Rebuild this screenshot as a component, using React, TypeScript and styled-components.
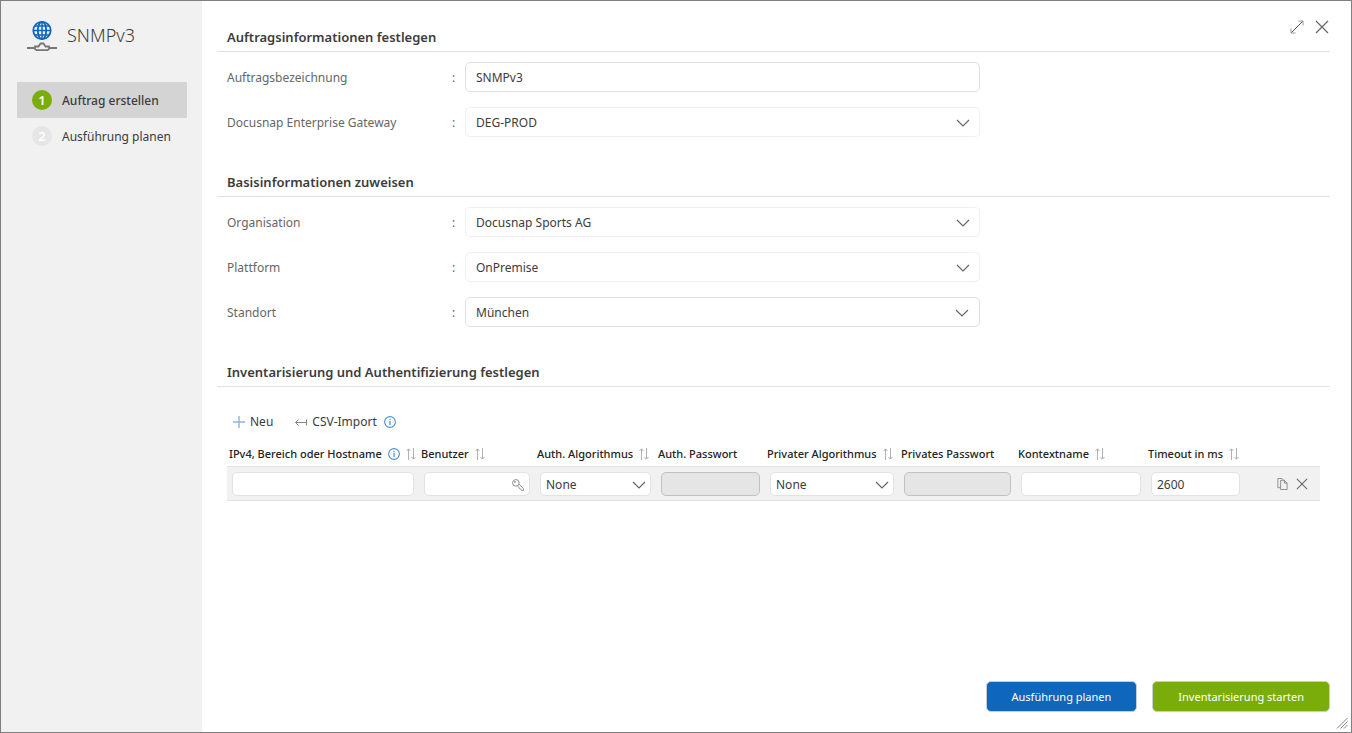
import React from 'react';
import styled, { createGlobalStyle } from 'styled-components';

const GlobalStyle = createGlobalStyle`
  *, *::before, *::after { box-sizing: border-box; }
  body { margin: 0; background: #fff; }
  body, button, input, select {
    font-family: 'Noto Sans', 'Open Sans', sans-serif;
    font-size: 12px;
    color: #3c3c3c;
  }
  button { cursor: pointer; }
`;

const Dialog = styled.div`
  position: relative;
  display: flex;
  min-height: 100vh;
  border: 1px solid #7f7f7f;
  background: #fff;
`;

const Sidebar = styled.aside`
  flex: 0 0 201px;
  padding: 17px 15px 0 16px;
  background: #f1f1f1;
`;

const Brand = styled.div`
  display: flex;
  align-items: center;
  gap: 10px;
  height: 36px;
  padding-left: 10px;
`;

const BrandTitle = styled.h1`
  margin: 0;
  padding-bottom: 2px;
  font-size: 18px;
  font-weight: 300;
  line-height: 24px;
`;

const Steps = styled.ol`
  margin: 28px 0 0;
  padding: 0;
  list-style: none;
`;

const StepButton = styled.button<{ $active?: boolean }>`
  display: flex;
  align-items: center;
  gap: 10px;
  width: 100%;
  height: 36px;
  padding: 0 15px;
  border: 0;
  background: ${(p) => (p.$active ? '#d4d4d4' : 'transparent')};
  font-weight: ${(p) => (p.$active ? 500 : 400)};
  white-space: nowrap;
`;

const StepNumber = styled.span<{ $active?: boolean }>`
  display: flex;
  align-items: center;
  justify-content: center;
  width: 20px;
  height: 20px;
  border-radius: 50%;
  background: ${(p) => (p.$active ? '#7aad0a' : '#e6e6e6')};
  color: #fff;
  font-size: 13px;
  font-weight: 600;
`;

const Main = styled.main`
  display: flex;
  flex: 1;
  flex-direction: column;
  min-width: 0;
  padding: 13px 21px 20px 15px;
`;

const Section = styled.section`
  & + & { margin-top: 22px; }
`;

const SectionHeader = styled.header`
  display: flex;
  align-items: center;
  justify-content: space-between;
  height: 38px;
  padding-top: 8px;
  padding-left: 10px;
  border-bottom: 1px solid #e1e1e1;
`;

const SectionTitle = styled.h2`
  margin: 0;
  font-size: 13px;
  font-weight: 600;
  line-height: 20px;
`;

const WindowControls = styled.div`
  display: flex;
  align-items: center;
  gap: 11px;
  padding-right: 1px;
  margin-bottom: 20px;
`;

const IconButton = styled.button`
  display: flex;
  align-items: center;
  justify-content: center;
  padding: 0;
  border: 0;
  background: none;
  color: #666;
`;

const Fields = styled.div`
  display: grid;
  gap: 15px;
  padding: 10px 0 0 10px;
`;

const FieldRow = styled.div`
  display: grid;
  grid-template-columns: 225px 13px minmax(0, 515px);
  align-items: center;
  color: #666;
`;

const fieldBox = `
  width: 100%;
  height: 30px;
  padding: 0 10px;
  border-radius: 5px;
  background: #fff;
  outline: 0;
`;

const TextField = styled.input`
  ${fieldBox}
  border: 1px solid #e0e0e0;
`;

const SelectWrap = styled.div<{ $inset?: number }>`
  position: relative;
  svg {
    position: absolute;
    top: 50%;
    right: ${(p) => p.$inset ?? 10}px;
    margin-top: -3px;
    color: #666;
    pointer-events: none;
  }
`;

const SelectField = styled.select<{ $strong?: boolean }>`
  ${fieldBox}
  display: block;
  appearance: none;
  border: 1px solid ${(p) => (p.$strong ? '#e0e0e0' : '#f0f0f0')};
`;

const Toolbar = styled.div`
  display: flex;
  align-items: center;
  gap: 22px;
  margin-top: 25px;
  padding-left: 16px;
  height: 20px;
`;

const ToolGroup = styled.div`
  display: flex;
  align-items: center;
  gap: 7px;
`;

const ToolButton = styled.button`
  display: flex;
  align-items: center;
  gap: 5px;
  padding: 0;
  border: 0;
  background: none;
  line-height: 20px;
`;

const TableWrap = styled.div`
  margin-top: 10px;
  padding: 0 10px;
`;

const Table = styled.table`
  width: 100%;
  table-layout: fixed;
  border-collapse: collapse;
`;

const HeadCell = styled.th`
  height: 24px;
  padding: 0 0 0 2px;
  font-size: 11px;
  font-weight: 500;
  text-align: left;
  white-space: nowrap;
  color: #222;
`;

const HeadContent = styled.div`
  display: flex;
  align-items: center;
  gap: 6px;
`;

const BodyRow = styled.tr`
  height: 34px;
  background: #f1f1f1;
  border-top: 1px solid #e3e3e3;
  border-bottom: 1px solid #e3e3e3;
`;

const Cell = styled.td`
  padding: 2px 5px 0;
`;

const cellBox = `
  display: block;
  width: 100%;
  height: 24px;
  padding: 0 5px;
  border-radius: 5px;
  outline: 0;
`;

const CellInput = styled.input`
  ${cellBox}
  border: 1px solid #e3e3e3;
  background: #fff;
  &:disabled {
    border-color: #c2c2c2;
    background: #e5e5e5;
  }
`;

const CellSelect = styled.select`
  ${cellBox}
  appearance: none;
  border: 1px solid #e3e3e3;
  background: #fff;
`;

const KeyField = styled.div`
  position: relative;
`;

const KeyButton = styled(IconButton)`
  position: absolute;
  top: 7px;
  right: 6px;
`;

const RowActions = styled.div`
  display: flex;
  align-items: center;
  justify-content: flex-end;
  gap: 8px;
  padding-right: 7px;
`;

const Footer = styled.footer`
  display: flex;
  justify-content: flex-end;
  gap: 15px;
  margin-top: auto;
  padding-top: 20px;
`;

const ActionButton = styled.button<{ $tone: string }>`
  height: 31px;
  padding: 0 25px;
  border: 1px solid #c8cdd4;
  border-radius: 5px;
  background: ${(p) => p.$tone};
  color: #fff;
  font-size: 11px;
  white-space: nowrap;
`;

const Grip = styled.svg`
  position: absolute;
  right: 3px;
  bottom: 3px;
`;

const NetworkIcon = () => (
  <svg width="30" height="32" viewBox="0 0 30 32" fill="none" aria-hidden="true">
    <g stroke="#0f66bd" strokeWidth="1.8">
      <circle cx="15" cy="10.500" r="8.700" />
      <ellipse cx="15" cy="10.500" rx="4.200" ry="8.700" />
      <path d="M15 1.800v17.400M6.300 10.500h17.400M7.500 6h15M7.500 15h15" strokeWidth="1.500" />
    </g>
    <path d="M0 28h7.500M22.500 28H30" stroke="#777" strokeWidth="2" />
    <path d="M8 26.500h3.500l2-3h3l2 3H22V29l-1.500 1.200h-11L8 29z" stroke="#777" strokeWidth="1.800" />
  </svg>
);

const ExpandIcon = () => (
  <svg width="14" height="14" viewBox="0 0 14 14" fill="none" stroke="currentColor" aria-hidden="true">
    <path d="M1 13L13 1" stroke="#555" />
    <path d="M8.500 1h4.500v4.500M1 8.500V13h4.500" stroke="#999" />
  </svg>
);

const CloseIcon = ({ size }: { size: number }) => (
  <svg width={size} height={size} viewBox="0 0 14 14" fill="none" stroke="currentColor" strokeWidth="1.2" aria-hidden="true">
    <path d="M1 1l12 12M13 1L1 13" />
  </svg>
);

const ChevronIcon = () => (
  <svg width="14" height="8" viewBox="0 0 14 8" fill="none" stroke="currentColor" strokeWidth="1.2" aria-hidden="true">
    <path d="M1 1l6 6 6-6" />
  </svg>
);

const PlusIcon = () => (
  <svg width="12" height="12" viewBox="0 0 12 12" fill="none" stroke="#8ab6de" aria-hidden="true">
    <path d="M6 0v12M0 6h12" strokeWidth="1.4" />
  </svg>
);

const ImportIcon = () => (
  <svg width="12" height="8" viewBox="0 0 12 8" fill="none" stroke="#777" aria-hidden="true">
    <path d="M1 4.500h10M3.500 1.500l-3 3 3 3M11.500 1.500v6" strokeWidth="0.9" />
  </svg>
);

const InfoIcon = () => (
  <svg width="12" height="12" viewBox="0 0 12 12" fill="none" stroke="#4a92d4" aria-label="Info" role="img">
    <circle cx="6" cy="6" r="5.400" strokeWidth="1.1" />
    <path d="M6 5v4M6 3v1.200" strokeWidth="1.2" />
  </svg>
);

const SortIcon = () => (
  <svg width="10" height="12" viewBox="0 0 10 12" fill="none" stroke="#a8a8a8" aria-hidden="true">
    <path d="M2.500 12V1M0.500 3l2-2.200 2 2.200M7.500 0v11M5.500 9l2 2.200 2-2.200" strokeWidth="0.9" />
  </svg>
);

const KeyIcon = () => (
  <svg width="12" height="12" viewBox="0 0 13 13" fill="none" stroke="#888" strokeWidth="1" aria-hidden="true">
    <circle cx="4.200" cy="4.200" r="3.600" />
    <circle cx="3.200" cy="3.200" r="0.600" />
    <path d="M7.600 5.600l4.800 4.800v2h-2l-1-1.600-1.400-.4-.6-1.600-1.600-1.300" />
  </svg>
);

const CopyIcon = () => (
  <svg width="11" height="12" viewBox="0 0 11 13" fill="none" stroke="#888" strokeWidth="1" aria-hidden="true">
    <path d="M3 10.500H.5v-10h4.500l1.500 1.500" />
    <path d="M3.500 2.500h4l3 3v7h-7zM7.500 2.500v3h3" />
  </svg>
);

type FieldProps = { id: string; label: string; children: React.ReactNode };

const Field = ({ id, label, children }: FieldProps) => (
  <FieldRow>
    <label htmlFor={id}>{label}</label>
    <span>:</span>
    {children}
  </FieldRow>
);

type DropdownProps = { id: string; value: string; strong?: boolean };

const Dropdown = ({ id, value, strong }: DropdownProps) => (
  <SelectWrap $inset={strong ? 11 : 10}>
    <SelectField id={id} $strong={strong} defaultValue={value}>
      <option>{value}</option>
    </SelectField>
    <ChevronIcon />
  </SelectWrap>
);

const AlgorithmSelect = ({ label }: { label: string }) => (
  <SelectWrap $inset={5}>
    <CellSelect aria-label={label} defaultValue="None">
      <option>None</option>
    </CellSelect>
    <ChevronIcon />
  </SelectWrap>
);

const columns = [
  { label: 'IPv4, Bereich oder Hostname', width: 192, info: true, sort: true },
  { label: 'Benutzer', width: 116, sort: true },
  { label: 'Auth. Algorithmus', width: 121, sort: true },
  { label: 'Auth. Passwort', width: 109 },
  { label: 'Privater Algorithmus', width: 134, sort: true },
  { label: 'Privates Passwort', width: 117 },
  { label: 'Kontextname', width: 130, sort: true },
  { label: 'Timeout in ms', width: 99, sort: true },
];

const Column = styled.col<{ $width: number }>`
  width: ${(p) => p.$width}px;
`;

export default function App() {
  return (
    <>
      <GlobalStyle />
      <Dialog role="dialog" aria-label="SNMPv3">
        <Sidebar>
          <Brand>
            <NetworkIcon />
            <BrandTitle>SNMPv3</BrandTitle>
          </Brand>
          <Steps>
            <li>
              <StepButton $active>
                <StepNumber $active>1</StepNumber>
                Auftrag erstellen
              </StepButton>
            </li>
            <li>
              <StepButton>
                <StepNumber>2</StepNumber>
                Ausführung planen
              </StepButton>
            </li>
          </Steps>
        </Sidebar>

        <Main>
          <Section>
            <SectionHeader>
              <SectionTitle>Auftragsinformationen festlegen</SectionTitle>
              <WindowControls>
                <IconButton aria-label="Maximieren"><ExpandIcon /></IconButton>
                <IconButton aria-label="Schließen"><CloseIcon size={14} /></IconButton>
              </WindowControls>
            </SectionHeader>
            <Fields>
              <Field id="name" label="Auftragsbezeichnung">
                <TextField id="name" defaultValue="SNMPv3" />
              </Field>
              <Field id="gateway" label="Docusnap Enterprise Gateway">
                <Dropdown id="gateway" value="DEG-PROD" />
              </Field>
            </Fields>
          </Section>

          <Section>
            <SectionHeader>
              <SectionTitle>Basisinformationen zuweisen</SectionTitle>
            </SectionHeader>
            <Fields>
              <Field id="organisation" label="Organisation">
                <Dropdown id="organisation" value="Docusnap Sports AG" />
              </Field>
              <Field id="platform" label="Plattform">
                <Dropdown id="platform" value="OnPremise" />
              </Field>
              <Field id="site" label="Standort">
                <Dropdown id="site" value="München" strong />
              </Field>
            </Fields>
          </Section>

          <Section>
            <SectionHeader>
              <SectionTitle>Inventarisierung und Authentifizierung festlegen</SectionTitle>
            </SectionHeader>
            <Toolbar>
              <ToolButton><PlusIcon />Neu</ToolButton>
              <ToolGroup>
                <ToolButton><ImportIcon />CSV-Import</ToolButton>
                <InfoIcon />
              </ToolGroup>
            </Toolbar>
            <TableWrap>
              <Table>
                <colgroup>
                  {columns.map((c) => <Column key={c.label} $width={c.width} />)}
                  <Column $width={75} />
                </colgroup>
                <thead>
                  <tr>
                    {columns.map((c) => (
                      <HeadCell key={c.label} scope="col">
                        <HeadContent>
                          {c.label}
                          {c.info && <InfoIcon />}
                          {c.sort && <SortIcon />}
                        </HeadContent>
                      </HeadCell>
                    ))}
                    <td />
                  </tr>
                </thead>
                <tbody>
                  <BodyRow>
                    <Cell><CellInput aria-label="IPv4, Bereich oder Hostname" /></Cell>
                    <Cell>
                      <KeyField>
                        <CellInput aria-label="Benutzer" />
                        <KeyButton aria-label="Anmeldedaten wählen"><KeyIcon /></KeyButton>
                      </KeyField>
                    </Cell>
                    <Cell><AlgorithmSelect label="Auth. Algorithmus" /></Cell>
                    <Cell><CellInput aria-label="Auth. Passwort" type="password" disabled /></Cell>
                    <Cell><AlgorithmSelect label="Privater Algorithmus" /></Cell>
                    <Cell><CellInput aria-label="Privates Passwort" type="password" disabled /></Cell>
                    <Cell><CellInput aria-label="Kontextname" /></Cell>
                    <Cell><CellInput aria-label="Timeout in ms" defaultValue="2600" /></Cell>
                    <Cell>
                      <RowActions>
                        <IconButton aria-label="Kopieren"><CopyIcon /></IconButton>
                        <IconButton aria-label="Entfernen"><CloseIcon size={12} /></IconButton>
                      </RowActions>
                    </Cell>
                  </BodyRow>
                </tbody>
              </Table>
            </TableWrap>
          </Section>

          <Footer>
            <ActionButton $tone="#0f66bd">Ausführung planen</ActionButton>
            <ActionButton $tone="#7aad0a">Inventarisierung starten</ActionButton>
          </Footer>
        </Main>

        <Grip width="12" height="12" viewBox="0 0 12 12" fill="none" stroke="#777" strokeWidth="0.9" aria-hidden="true">
          <path d="M1 11.500L11.500 1M4.500 11.500l7-7M8 11.500L11.500 8" />
        </Grip>
      </Dialog>
    </>
  );
}
